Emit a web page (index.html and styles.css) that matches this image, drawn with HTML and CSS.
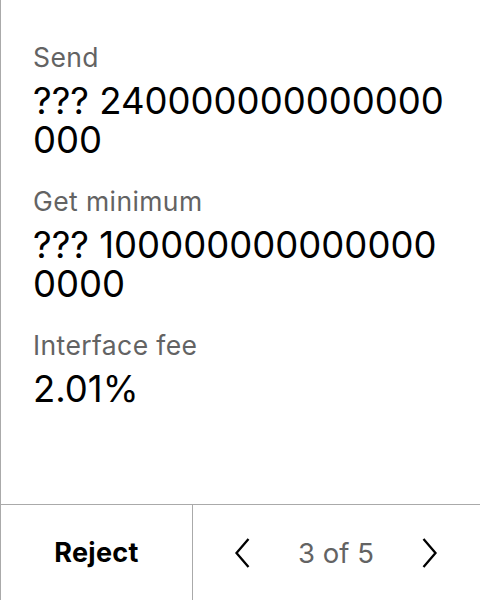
FILE: index.html
```html
<!DOCTYPE html>
<html>
<head>
<meta charset="utf-8">
<link rel="stylesheet" href="styles.css">
</head>
<body>
<div class="screen">
  <div class="content">
    <div class="field">
      <div class="label">Send</div>
      <div class="value">??? 240000000000000000</div>
    </div>
    <div class="field">
      <div class="label">Get minimum</div>
      <div class="value">??? 1000000000000000000</div>
    </div>
    <div class="field">
      <div class="label">Interface fee</div>
      <div class="value">2.01%</div>
    </div>
  </div>
  <div class="footer">
    <div class="reject">Reject</div>
    <div class="pager">
      <svg class="chev" width="20" height="32" viewBox="0 0 20 32"><path d="M16.5 2 L4.5 16 L16.5 30" fill="none" stroke="#000" stroke-width="2.3"/></svg>
      <span class="count">3 of 5</span>
      <svg class="chev" width="20" height="32" viewBox="0 0 20 32"><path d="M3.5 2 L15.5 16 L3.5 30" fill="none" stroke="#000" stroke-width="2.3"/></svg>
    </div>
  </div>
</div>
</body>
</html>
```
FILE: styles.css
```css
html, body {
  margin: 0;
  padding: 0;
  background: #fff;
}
body {
  font-family: Inter, "Noto Sans", sans-serif;
  color: #000;
}
.screen {
  width: 480px;
  height: 600px;
  box-sizing: border-box;
  border-left: 1px solid #aaa;
  display: flex;
  flex-direction: column;
}
.content {
  flex: 1;
  padding: 41px 30px 0 32px;
  display: flex;
  flex-direction: column;
  gap: 25px;
}
.label {
  font-size: 26.5px;
  letter-spacing: 0.4px;
  line-height: 32px;
  color: #636363;
}
.value {
  font-size: 36.5px;
  line-height: 39px;
  margin-top: 9px;
  word-break: break-all;
}
.footer {
  height: 95px;
  border-top: 1px solid #aaa;
  display: flex;
}
.reject {
  width: 191px;
  border-right: 1px solid #aaa;
  display: flex;
  align-items: center;
  justify-content: center;
  font-size: 27px;
  font-weight: 700;
  letter-spacing: 0.3px;
}
.pager {
  flex: 1;
  display: flex;
  align-items: center;
  justify-content: space-between;
  padding: 0 40px 0 39px;
}
.count {
  font-size: 27.5px;
  color: #636363;
}
```
